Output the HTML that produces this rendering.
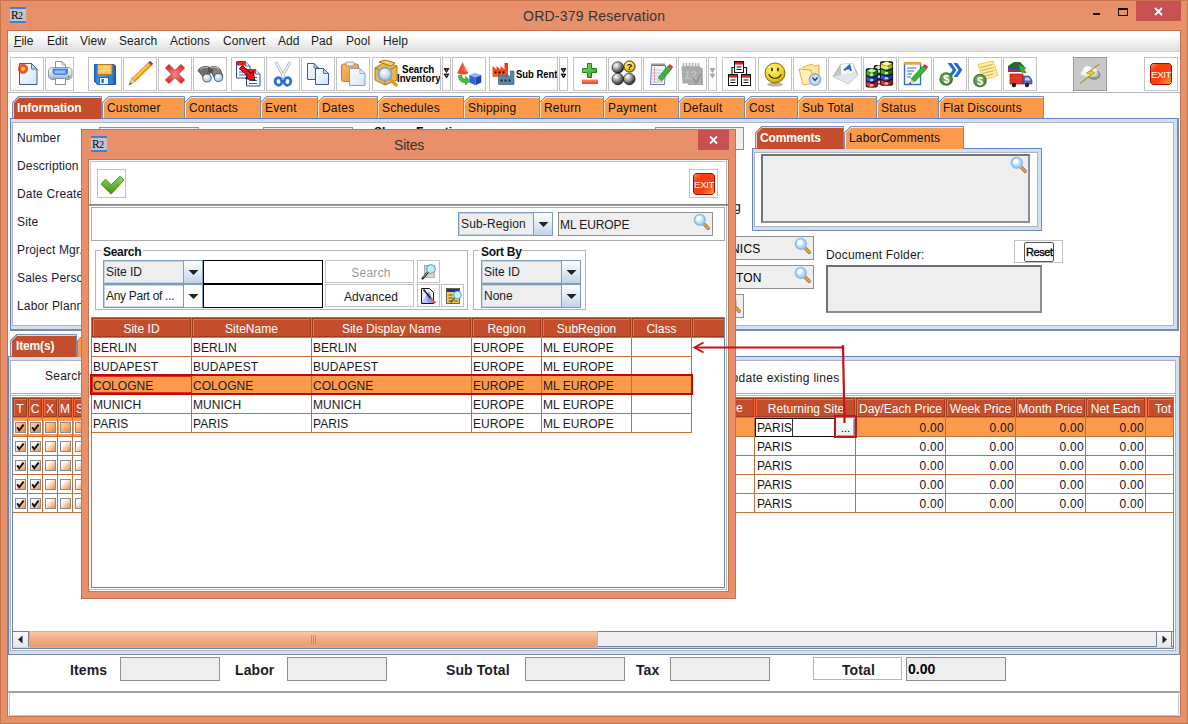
<!DOCTYPE html><html><head><meta charset="utf-8"><title>ORD-379 Reservation</title><style>
*{box-sizing:border-box;margin:0;padding:0}
html,body{width:1188px;height:724px;overflow:hidden}
body{position:relative;background:#E8906A;font-family:"Liberation Sans",sans-serif;font-size:12px;color:#000}
div,span,svg{position:absolute}
span{white-space:nowrap;line-height:16px}
.t13{font-size:12px;letter-spacing:0.15px}
.t12{font-size:12px;line-height:15px}
.b{font-weight:bold}
.wh{color:#fff}
.tb{background:#fff;border:1px solid #c3c3c3;overflow:hidden}
.fld{background:#eee;border:1px solid #8e8f8f}
.hc{background:#C44E2C;border:1px solid #a03c1c;box-shadow:inset 1px 1px 0 #FF6A3A;color:#fff;font-size:12px;line-height:18px;padding-top:1px;text-align:center;overflow:hidden;white-space:nowrap;letter-spacing:0.03px}
.cb{width:11px;height:11px;border:1px solid #848c98;background:linear-gradient(135deg,#fff 25%,#f8c8a0 60%,#f09048 100%)}
.cbs{width:13px;height:13px;border:1px solid #fff;background:linear-gradient(135deg,#fdd0a8 15%,#f68a34 85%);box-shadow:inset 0 0 0 1px #848c98}
.combo{background:#eee;border:1px solid #7f9db9;box-shadow:inset 0 0 0 1px #c4d4e8}
.cbtn{background:linear-gradient(#fdfeff,#dfe8f4 55%,#c0d2ea);border:1px solid #7f9db9}
</style></head><body>
<svg width="0" height="0" style="left:0;top:0"><defs><linearGradient id="gPage" x1="0" y1="0" x2="1" y2="1"><stop offset="0" stop-color="#fff"/><stop offset="1" stop-color="#d4e2f6"/></linearGradient><radialGradient id="gLens" cx="0.4" cy="0.35" r="0.7"><stop offset="0" stop-color="#fff"/><stop offset="1" stop-color="#8ec4ee"/></radialGradient><radialGradient id="gBall" cx="0.35" cy="0.3" r="0.8"><stop offset="0" stop-color="#ffffff"/><stop offset="0.35" stop-color="#b0b0b0"/><stop offset="0.75" stop-color="#484848"/><stop offset="1" stop-color="#080808"/></radialGradient><radialGradient id="gYel" cx="0.4" cy="0.3" r="0.8"><stop offset="0" stop-color="#fff68a"/><stop offset="0.6" stop-color="#f4d018"/><stop offset="1" stop-color="#b88a00"/></radialGradient><radialGradient id="gGrn" cx="0.4" cy="0.3" r="0.8"><stop offset="0" stop-color="#88b878"/><stop offset="1" stop-color="#3c7838"/></radialGradient><linearGradient id="gRed" x1="0" y1="0" x2="0" y2="1"><stop offset="0" stop-color="#f0522c"/><stop offset="1" stop-color="#c41a10"/></linearGradient><linearGradient id="gBlue" x1="0" y1="0" x2="0" y2="1"><stop offset="0" stop-color="#5aa0f0"/><stop offset="1" stop-color="#1c5cc0"/></linearGradient><linearGradient id="gExit" x1="0" y1="0" x2="1" y2="1"><stop offset="0" stop-color="#f49078"/><stop offset="0.25" stop-color="#ff3c08"/><stop offset="0.6" stop-color="#f6420e"/><stop offset="1" stop-color="#ffa038"/></linearGradient><radialGradient id="gStar" cx="0.5" cy="0.5" r="0.5"><stop offset="0" stop-color="#ffd020"/><stop offset="0.45" stop-color="#f85818"/><stop offset="0.8" stop-color="#f03020" stop-opacity=".85"/><stop offset="1" stop-color="#f03020" stop-opacity="0"/></radialGradient><linearGradient id="gPrn" x1="0" y1="0" x2="0" y2="1"><stop offset="0" stop-color="#fcfcfc"/><stop offset="0.6" stop-color="#d4d8de"/><stop offset="1" stop-color="#9ca4b0"/></linearGradient><linearGradient id="gFlop" x1="0" y1="0" x2="1" y2="0"><stop offset="0" stop-color="#1c6cc4"/><stop offset="0.25" stop-color="#48a0ec"/><stop offset="0.8" stop-color="#2c84dc"/><stop offset="1" stop-color="#1460b4"/></linearGradient><radialGradient id="gX" cx="0.5" cy="0.5" r="0.6"><stop offset="0" stop-color="#f49090"/><stop offset="0.6" stop-color="#e64848"/><stop offset="1" stop-color="#d42828"/></radialGradient><linearGradient id="gClip" x1="0" y1="0" x2="1" y2="1"><stop offset="0" stop-color="#f8b868"/><stop offset="1" stop-color="#f09030"/></linearGradient><linearGradient id="gCone" x1="0" y1="0" x2="1" y2="0"><stop offset="0" stop-color="#f03818"/><stop offset="0.6" stop-color="#f46838"/><stop offset="1" stop-color="#f8a878"/></linearGradient><linearGradient id="gFac" x1="0" y1="0" x2="0" y2="1"><stop offset="0" stop-color="#f02810"/><stop offset="1" stop-color="#f86830"/></linearGradient><linearGradient id="gPlus" x1="0" y1="0" x2="1" y2="1"><stop offset="0" stop-color="#90d880"/><stop offset="1" stop-color="#28a020"/></linearGradient><linearGradient id="gMinus" x1="0" y1="0" x2="0" y2="1"><stop offset="0" stop-color="#f89060"/><stop offset="1" stop-color="#f04020"/></linearGradient><radialGradient id="gCloud" cx="0.35" cy="0.3" r="0.8"><stop offset="0" stop-color="#ffffff"/><stop offset="0.6" stop-color="#f0f0f0"/><stop offset="1" stop-color="#c0c0c0"/></radialGradient></defs></svg>
<div style="left:0px;top:0px;width:1188px;height:724px;border:1px solid #C5744E;background:#E8906A"></div>
<div style="left:10px;top:7px;width:16px;height:16px;background:#c2c4c8;border-top:2px solid #3a80dc;border-bottom:2px solid #3a80dc;overflow:hidden"><span style="left:1px;top:-1px;font-family:'Liberation Serif',serif;font-size:11.5px;line-height:14px;letter-spacing:-0.5px">R<span style="position:static;font-size:9.5px">2</span></span></div>
<span class="" style="left:523px;top:6px;font-size:14px;line-height:20px;color:#333;letter-spacing:0.24px">ORD-379 Reservation</span>
<div style="left:1136px;top:1px;width:45px;height:20px;background:#c75050"></div>
<svg style="left:1090px;top:4px" width="92" height="16" viewBox="0 0 92 16"><rect x="3" y="9" width="7" height="2" fill="#111"/><rect x="28.5" y="4.5" width="9" height="7" fill="none" stroke="#111"/><rect x="28" y="4" width="10" height="2" fill="#111"/><path d="M65 4l7 7M72 4l-7 7" stroke="#fff" stroke-width="1.8" fill="none"/></svg>
<div style="left:7px;top:30px;width:1174px;height:687px;background:#fff;border:1px solid #C5744E"></div>
<div style="left:8px;top:31px;width:1172px;height:21px;background:linear-gradient(#fff 0%,#fdfdfd 30%,#ececec 70%,#dedede 100%);border-bottom:1px solid #d0d0d0"></div>
<span class="" style="left:14px;top:33px;font-size:12px;color:#1a1a1a;letter-spacing:0.05px"><u>F</u>ile</span>
<span class="" style="left:47px;top:33px;font-size:12px;color:#1a1a1a;letter-spacing:0.05px">Edit</span>
<span class="" style="left:80px;top:33px;font-size:12px;color:#1a1a1a;letter-spacing:0.05px">View</span>
<span class="" style="left:119px;top:33px;font-size:12px;color:#1a1a1a;letter-spacing:0.05px">Search</span>
<span class="" style="left:170px;top:33px;font-size:12px;color:#1a1a1a;letter-spacing:0.05px">Actions</span>
<span class="" style="left:223px;top:33px;font-size:12px;color:#1a1a1a;letter-spacing:0.05px">Convert</span>
<span class="" style="left:278px;top:33px;font-size:12px;color:#1a1a1a;letter-spacing:0.05px">Add</span>
<span class="" style="left:311px;top:33px;font-size:12px;color:#1a1a1a;letter-spacing:0.05px">Pad</span>
<span class="" style="left:346px;top:33px;font-size:12px;color:#1a1a1a;letter-spacing:0.05px">Pool</span>
<span class="" style="left:383px;top:33px;font-size:12px;color:#1a1a1a;letter-spacing:0.05px">Help</span>
<div style="left:8px;top:52px;width:1172px;height:41px;background:#fff;border-bottom:1px solid #b8b8b8"></div>
<div class="tb" style="left:10px;top:57px;width:34px;height:34px;"><svg style="left:0px;top:0px" width="32" height="32" viewBox="0 0 32 32"><path d="M8.500 5.500h12l5.500 5.500v15.500h-17.500z" fill="url(#gPage)" stroke="#3c5894"/><path d="M20.500 5.500v5.500h5.500z" fill="#b8d4f4" stroke="#3c5894" stroke-width=".8"/><circle cx="12" cy="10.800" r="5.600" fill="url(#gStar)"/><circle cx="12" cy="10.800" r="1.900" fill="#ffe840"/></svg></div>
<div class="tb" style="left:45px;top:57px;width:29px;height:34px;"><svg style="left:0px;top:0px" width="27" height="32" viewBox="0 0 27 32"><path d="M9.500 3.500h6.500l3.500 3.500v6h-10z" fill="#fff" stroke="#8890a0"/><path d="M16 3.500v3.500h3.500" fill="none" stroke="#8890a0" stroke-width=".8"/><path d="M2.500 13c0-2.500 2-3.500 4-3.500h15.500c2 0 4 1 4 3.500v5c0 2-2 3.500-4.500 3.500h-14.500c-2.500 0-4.500-1.500-4.500-3.500z" fill="url(#gPrn)" stroke="#7c8494" stroke-width=".8"/><path d="M6.500 10.500h15.500v4c0 1.500-1.500 2.500-3 2.500h-9.500c-1.500 0-3-1-3-2.500z" fill="#3c84e8"/><path d="M8.500 12.500h11v3h-11z" fill="#9cc4f8"/><rect x="9.500" y="20.500" width="10" height="6" fill="#fff" stroke="#8890a0"/><circle cx="22.600" cy="18.500" r="1" fill="#2aa82a"/></svg></div>
<div class="tb" style="left:88px;top:57px;width:34px;height:34px;"><svg style="left:0px;top:0px" width="32" height="32" viewBox="0 0 32 32"><path d="M5.500 6.500h19.500l1.500 1.500v18.500h-18l-3-3z" fill="url(#gFlop)" stroke="#1858a8"/><rect x="8.500" y="6.500" width="14.500" height="10" fill="#f8c060" stroke="#b87828"/><path d="M10.500 9.500h10.500M10.500 12.500h10.500" stroke="#f8e070" stroke-width="1.600"/><rect x="10.500" y="19.500" width="9" height="7" fill="#f0f4fc" stroke="#1858a8" stroke-width=".8"/><rect x="12.500" y="21" width="2.200" height="4" fill="#1c64c8"/></svg></div>
<div class="tb" style="left:123px;top:57px;width:34px;height:34px;"><svg style="left:0px;top:0px" width="32" height="32" viewBox="0 0 32 32"><path d="M4 28l3-9 8 1z" fill="#000" opacity=".12"/><path d="M8 20.500L24.200 4.800l3 3L11 23.500z" fill="#f89c10" stroke="#c87404" stroke-width=".6"/><path d="M9.200 21.500L25.400 5.800" stroke="#ffd458" stroke-width="1.300"/><path d="M8 20.500l3 3L5 27z" fill="#f0d0a8" stroke="#a08060" stroke-width=".5"/><path d="M5 27l1.500-2.600 1.300 1.300z" fill="#333"/><path d="M24.200 4.800l1.200-1.200 3 3-1.200 1.200z" fill="#d83030"/><path d="M25.400 3.600l.8-.7 3 3-.8.700z" fill="#222"/></svg></div>
<div class="tb" style="left:158px;top:57px;width:34px;height:34px;"><svg style="left:0px;top:0px" width="32" height="32" viewBox="0 0 32 32"><path d="M6.500 10L10 6.500 16 12.500 22 6.500 25.500 10 19.500 16 25.500 22 22 25.500 16 19.500 10 25.500 6.500 22 12.500 16z" fill="url(#gX)" stroke="#c03030" stroke-width=".9" stroke-linejoin="round"/></svg></div>
<div class="tb" style="left:193px;top:57px;width:34px;height:34px;"><svg style="left:0px;top:0px" width="32" height="32" viewBox="0 0 32 32"><path d="M4 12.500c2-3.500 7-5 11-3.500l3 5-8 6z" fill="#707070" stroke="#404040" stroke-width=".8"/><path d="M15 10c3-2.500 8-2 11 1l3 7-8 3z" fill="#808080" stroke="#404040" stroke-width=".8"/><path d="M6 11.500c2-2 5-2.500 8-2M17 9.500c3-1 6-.5 8.500 1.500" stroke="#c0c0c0" stroke-width="1" fill="none"/><ellipse cx="13" cy="20" rx="4.200" ry="4" fill="url(#gLens)" stroke="#444" stroke-width=".8"/><ellipse cx="24.500" cy="19.500" rx="4.200" ry="4" fill="url(#gLens)" stroke="#444" stroke-width=".8"/><rect x="14" y="10.500" width="5" height="4" fill="#505050"/></svg></div>
<div class="tb" style="left:231px;top:57px;width:34px;height:34px;"><svg style="left:0px;top:0px" width="32" height="32" viewBox="0 0 32 32"><path d="M4.500 3.500h9l4.500 4.500v12h-13.500z" fill="#fff" stroke="#2c4c9c"/><rect x="5" y="4" width="8.500" height="3.500" fill="#e82020"/><path d="M13.500 3.500v4.500h4.500" fill="#dce8f8" stroke="#2c4c9c" stroke-width=".8"/><path d="M7 11h8M7 14h8M7 17h8" stroke="#3c5cac"/><path d="M14.500 11.500h9l4.500 4.500v12h-13.500z" fill="#fff" stroke="#2c4c9c"/><rect x="15" y="12" width="8.500" height="3.500" fill="#e82020"/><path d="M23.500 11.500v4.500h4.500" fill="#dce8f8" stroke="#2c4c9c" stroke-width=".8"/><path d="M17 19.500h8M17 22.500h8M17 25.500h8" stroke="#3c5cac"/><path d="M7.500 10.500l3-3 8.500 8 2-2.500 2 9.500-9.500-2 2.500-2z" fill="#f01010" stroke="#200" stroke-width=".9" stroke-linejoin="round"/></svg></div>
<div class="tb" style="left:266px;top:57px;width:34px;height:34px;"><svg style="left:0px;top:0px" width="32" height="32" viewBox="0 0 32 32"><path d="M9.500 5l7.500 14M22.500 5l-7.500 14" stroke="#b0b4bc" stroke-width="2.800" stroke-linecap="round"/><path d="M9.500 5l7.500 14M22.500 5l-7.500 14" stroke="#f4f6fa" stroke-width="1.400" stroke-linecap="round"/><ellipse cx="11.500" cy="23.500" rx="3.300" ry="3.800" fill="none" stroke="#2870d8" stroke-width="2.800" transform="rotate(-15 11.500 23.500)"/><ellipse cx="20.500" cy="23.500" rx="3.300" ry="3.800" fill="none" stroke="#2870d8" stroke-width="2.800" transform="rotate(15 20.500 23.500)"/></svg></div>
<div class="tb" style="left:301px;top:57px;width:34px;height:34px;"><svg style="left:0px;top:0px" width="32" height="32" viewBox="0 0 32 32"><path d="M5.500 5.500h6.500l4.500 4.500v11.500h-11z" fill="url(#gPage)" stroke="#3c5894"/><path d="M12 5.500v4.500h4.500z" fill="#b8d4f4" stroke="#3c5894" stroke-width=".8"/><path d="M13.500 10.500h8l5 5v11h-13z" fill="url(#gPage)" stroke="#3c5894"/><path d="M21.500 10.500v5h5z" fill="#b8d4f4" stroke="#3c5894" stroke-width=".8"/></svg></div>
<div class="tb" style="left:336px;top:57px;width:34px;height:34px;"><svg style="left:0px;top:0px" width="32" height="32" viewBox="0 0 32 32"><rect x="4.500" y="6" width="17" height="17.500" rx="2" fill="url(#gClip)" stroke="#c87828"/><rect x="9" y="4" width="8" height="4" rx="1" fill="#f0f0f0" stroke="#888" stroke-width=".8"/><path d="M12.500 10.500h10.500l5 5v12h-15.500z" fill="url(#gPage)" stroke="#8898d8"/><path d="M23 10.500v5h5" fill="none" stroke="#8898d8" stroke-width=".8"/></svg></div>
<div class="tb" style="left:372px;top:57px;width:69px;height:34px;"><svg style="left:-2px;top:-2px" width="30" height="32" viewBox="0 0 30 32"><path d="M4 12l10-6 12 4v14l-12 5-10-5z" fill="#e8b848" stroke="#a87818"/><path d="M4 12l10 4 12-6M14 16v13" stroke="#a87818" fill="none"/><path d="M8 6l6-2 10 3-4 3z" fill="#f4d070" stroke="#a87818"/><path d="M19 23l6 6" stroke="#e09a3a" stroke-width="3.500" stroke-linecap="round"/><circle cx="14" cy="18" r="6.500" fill="url(#gLens)" stroke="#8aa4c4" stroke-width="2"/></svg><span class="b" style="left:29px;top:6px;font-size:11px;line-height:11px;transform:scaleX(0.88);transform-origin:0 0">Search</span><span class="b" style="left:24px;top:15px;font-size:11px;line-height:11px;transform:scaleX(0.88);transform-origin:0 0">Inventory</span></div>
<div class="tb" style="left:442px;top:57px;width:9px;height:34px;"><svg style="left:0px;top:0px" width="7" height="32" viewBox="0 0 7 32"><path d="M1 10.500h5l-2.500 4zM1 16h5l-2.500 4z" fill="#111" stroke="#111" stroke-width=".8"/><path d="M3.500 11.600v.8M3.500 17.100v.8" stroke="#fff" stroke-width="1"/></svg></div>
<div class="tb" style="left:452px;top:57px;width:34px;height:34px;"><svg style="left:0px;top:0px" width="32" height="32" viewBox="0 0 32 32"><path d="M9.500 4L15.200 14.800H4.500z" fill="url(#gCone)"/><ellipse cx="9.800" cy="14.800" rx="5.400" ry="1.800" fill="#e8502c"/><path d="M16.400 17l5.600-2.300 6.300 2.300-5.800 2.500z" fill="#8cb8f8"/><path d="M16.400 17l6.100 2.500v7.800l-6.100-2.800z" fill="#2c68d8"/><path d="M22.500 19.500l5.800-2.500v7.500l-5.800 2.800z" fill="#1c48b0"/><path d="M5.500 17.500c0 5 3 7.500 7 7v2.500l4.500-4.500-4.500-4v2.500c-2 .3-3.500-.7-3.500-3.500z" fill="#40c040" stroke="#1c8c1c" stroke-width=".6"/></svg></div>
<div class="tb" style="left:489px;top:57px;width:69px;height:34px;"><svg style="left:0px;top:0px" width="26" height="32" viewBox="0 0 26 32"><path d="M2.500 19V8l4 3.500V8l4 3.500V8l4 3.500V5h3.500v14z" fill="url(#gFac)"/><path d="M4.500 14.500h2M8.500 14.500h2M12.500 14.500h2" stroke="#300" stroke-width="2"/><path d="M8.500 26.500V16l4 3v-3l4 3v-3l4 3v-6h3.500v13.500z" fill="#5c88a8" stroke="#3c6080" stroke-width=".7"/><path d="M10.500 22.500h2M14.500 22.500h2M18.500 22.500h2" stroke="#123" stroke-width="2"/></svg><span class="b" style="left:26px;top:10px;font-size:11px;line-height:12px;transform:scaleX(0.86);transform-origin:0 0">Sub Rent</span></div>
<div class="tb" style="left:559px;top:57px;width:9px;height:34px;"><svg style="left:0px;top:0px" width="7" height="32" viewBox="0 0 7 32"><path d="M1 10.500h5l-2.500 4zM1 16h5l-2.500 4z" fill="#111" stroke="#111" stroke-width=".8"/><path d="M3.500 11.600v.8M3.500 17.100v.8" stroke="#fff" stroke-width="1"/></svg></div>
<div class="tb" style="left:573px;top:57px;width:34px;height:34px;"><svg style="left:0px;top:0px" width="32" height="32" viewBox="0 0 32 32"><path d="M13.500 5.500h4v5h5v4h-5v5h-4v-5h-5v-4h5z" fill="url(#gPlus)" stroke="#1c8418"/><rect x="8" y="21.500" width="16" height="4.500" fill="url(#gMinus)"/></svg></div>
<div class="tb" style="left:608px;top:57px;width:34px;height:34px;"><svg style="left:0px;top:0px" width="32" height="32" viewBox="0 0 32 32"><circle cx="8.800" cy="9.500" r="5.800" fill="url(#gBall)" stroke="#000" stroke-width=".6"/><circle cx="8.800" cy="21" r="5.800" fill="url(#gBall)" stroke="#000" stroke-width=".6"/><circle cx="20.300" cy="21" r="5.800" fill="url(#gBall)" stroke="#000" stroke-width=".6"/><circle cx="20.500" cy="8.500" r="5.600" fill="url(#gYel)" stroke="#302000" stroke-width=".9"/><text x="20.500" y="12" font-family="Liberation Sans,sans-serif" font-size="9.500" font-weight="bold" text-anchor="middle" fill="#111">?</text></svg></div>
<div class="tb" style="left:643px;top:57px;width:34px;height:34px;"><svg style="left:0px;top:0px" width="32" height="32" viewBox="0 0 32 32"><path d="M7.500 7.500h14l-1 19h-14z" fill="#f4f6fc" stroke="#6c7cc8"/><path d="M8 12h12M8 15h12M7.500 18h12M7.500 21h12M7 24h12" stroke="#a8b8e8" stroke-width=".8"/><path d="M10.500 9v15" stroke="#e88" stroke-width=".8"/><path d="M8 7.500v-2M10 7.500v-2M12 7.500v-2M14 7.500v-2M16 7.500v-2M18 7.500v-2M20 7.500v-2" stroke="#555" stroke-width="1.200"/><path d="M14 20L24 8l3.500 3L17.500 23z" fill="#38b838" stroke="#187818" stroke-width=".7"/><path d="M14 20l3.500 3-5 2z" fill="#e8c8a0"/><path d="M24 8l1.800-2 3.500 3-1.800 2z" fill="#e03030"/></svg></div>
<div class="tb" style="left:678px;top:57px;width:29px;height:34px;"><svg style="left:0px;top:0px" width="27" height="32" viewBox="0 0 27 32"><path d="M2.500 8h18.500l1 17.500H3.500z" fill="#ababab"/><path d="M21 9.500l2.500.5.500 17H9v-1.500h13z" fill="#a0a0a0"/><path d="M4.500 8.500V5.500M7.500 8.500V5.500M10.500 8.500V5.500M13.500 8.500V5.500M16.500 8.500V5.500M19.500 8.500V5.500" stroke="#b4b4b4" stroke-width="1.600" stroke-linecap="round"/><text x="11.500" y="20.500" font-family="Liberation Sans,sans-serif" font-size="11.500" font-weight="bold" text-anchor="middle" fill="#c4c4c4">12</text><path d="M13.500 19l3.500 6 5-9" stroke="#949494" stroke-width="1.600" fill="none"/></svg></div>
<div class="tb" style="left:708px;top:57px;width:9px;height:34px;"><svg style="left:0px;top:0px" width="7" height="32" viewBox="0 0 7 32"><path d="M1 10.500h5l-2.500 4zM1 16h5l-2.500 4z" fill="#a8a8a8" stroke="#a8a8a8" stroke-width=".8"/></svg></div>
<div class="tb" style="left:722px;top:57px;width:34px;height:34px;"><svg style="left:0px;top:0px" width="32" height="32" viewBox="0 0 32 32"><path d="M9 17V9.500h14.500V17" stroke="#111" stroke-width="1.100" fill="none"/><rect x="11.500" y="3.500" width="9" height="11" fill="#fff" stroke="#111"/><rect x="12" y="4" width="8" height="2.600" fill="#e81818"/><path d="M13.500 9h5M13.500 11.500h5" stroke="#111" stroke-width="1.100"/><rect x="5.500" y="16.500" width="9" height="11" fill="#fff" stroke="#111"/><rect x="6" y="17" width="8" height="2.600" fill="#e81818"/><path d="M7.500 22h5M7.500 24.500h5" stroke="#111" stroke-width="1.100"/><rect x="18.500" y="16.500" width="9" height="11" fill="#fff" stroke="#111"/><rect x="19" y="17" width="8" height="2.600" fill="#e81818"/><path d="M20.500 22h5M20.500 24.500h5" stroke="#111" stroke-width="1.100"/></svg></div>
<div class="tb" style="left:758px;top:57px;width:34px;height:34px;"><svg style="left:0px;top:0px" width="32" height="32" viewBox="0 0 32 32"><ellipse cx="16" cy="26.500" rx="8" ry="2" fill="#402800" opacity=".35"/><circle cx="16" cy="15" r="10" fill="url(#gYel)" stroke="#705000" stroke-width=".8"/><ellipse cx="13" cy="11.500" rx=".9" ry="2" fill="#222"/><ellipse cx="19" cy="11.500" rx=".9" ry="2" fill="#222"/><path d="M10 16.500c2 5 10 5 12 0" stroke="#222" stroke-width="1.200" fill="none" stroke-linecap="round"/></svg></div>
<div class="tb" style="left:793px;top:57px;width:34px;height:34px;"><svg style="left:0px;top:0px" width="32" height="32" viewBox="0 0 32 32"><path d="M9 9l9-3 2 2 5-1v14l-14 5z" fill="#fce8a0" stroke="#e8a830" stroke-width=".9"/><path d="M5 11l12 1 3 13-11 2z" fill="#fdf0b8" stroke="#e8a830" stroke-width=".9"/><circle cx="21" cy="21.500" r="5.600" fill="#c4e0fc" stroke="#90acd0" stroke-width="1.600"/><path d="M18.500 19.500l2.500 2.800 2.500-2.800" stroke="#223" stroke-width="1.200" fill="none"/></svg></div>
<div class="tb" style="left:828px;top:57px;width:34px;height:34px;"><svg style="left:0px;top:0px" width="32" height="32" viewBox="0 0 32 32"><path d="M4 18.500L11.500 6.500l12-1L29 16.500l-9.500 9.500z" fill="#c4c4cc" stroke="#a0a0a8" stroke-width=".7"/><path d="M11.500 6.500l12-1 3 8.500-14 3z" fill="#fdfdff"/><path d="M12.500 17l14-3 2.500 2.500-9.500 9.500-15.500-7.500z" fill="#e4e4ea"/><path d="M15 12.500l5.500-5 1.500 5.500M17 10.800l4.200-.4" stroke="#2464d8" stroke-width="1.800" fill="none"/></svg></div>
<div class="tb" style="left:863px;top:57px;width:34px;height:34px;"><svg style="left:0px;top:0px" width="32" height="32" viewBox="0 0 32 32"><rect x="9.7" y="6.9" width="9.6" height="19.299999999999997" rx="2" fill="#111"/><path d="M10.5 9.5l4.0-2.400 4.0 2.400-4.0 2.200z" fill="#b0f0a0"/><path d="M10.5 9.7l4.0 2.200v4.1l-4.0-2.200z" fill="#30b030"/><path d="M18.5 9.7l-4.0 2.200v4.1l4.0-2.200z" fill="#187018"/><ellipse cx="14.5" cy="13.35" rx="1.800" ry="1.300" fill="#fff" opacity=".75"/><path d="M10.5 15.0l4.0 2.200v4.1l-4.0-2.200z" fill="#3050e8"/><path d="M18.5 15.0l-4.0 2.200v4.1l4.0-2.200z" fill="#1830a8"/><ellipse cx="14.5" cy="18.65" rx="1.800" ry="1.300" fill="#fff" opacity=".75"/><path d="M10.5 20.299999999999997l4.0 2.200v4.1l-4.0-2.200z" fill="#e83030"/><path d="M18.5 20.299999999999997l-4.0 2.200v4.1l4.0-2.200z" fill="#a81818"/><ellipse cx="14.5" cy="23.949999999999996" rx="1.800" ry="1.300" fill="#fff" opacity=".75"/><rect x="1.7" y="10.200000000000001" width="12.1" height="19.299999999999997" rx="2" fill="#111"/><path d="M2.5 12.8l5.25-2.400 5.25 2.400-5.25 2.200z" fill="#b0f0a0"/><path d="M2.5 13.0l5.25 2.200v4.1l-5.25-2.200z" fill="#30b030"/><path d="M13.0 13.0l-5.25 2.200v4.1l5.25-2.200z" fill="#187018"/><ellipse cx="7.75" cy="16.65" rx="1.800" ry="1.300" fill="#fff" opacity=".75"/><path d="M2.5 18.3l5.25 2.200v4.1l-5.25-2.200z" fill="#3050e8"/><path d="M13.0 18.3l-5.25 2.200v4.1l5.25-2.200z" fill="#1830a8"/><ellipse cx="7.75" cy="21.95" rx="1.800" ry="1.300" fill="#fff" opacity=".75"/><path d="M2.5 23.6l5.25 2.200v4.1l-5.25-2.200z" fill="#e83030"/><path d="M13.0 23.6l-5.25 2.200v4.1l5.25-2.200z" fill="#a81818"/><ellipse cx="7.75" cy="27.25" rx="1.800" ry="1.300" fill="#fff" opacity=".75"/><rect x="16.0" y="3.1999999999999997" width="13.1" height="24.599999999999998" rx="2" fill="#111"/><path d="M16.8 5.8l5.75-2.400 5.75 2.400-5.75 2.200z" fill="#ffff90"/><path d="M16.8 6.0l5.75 2.200v4.1l-5.75-2.200z" fill="#e8e838"/><path d="M28.3 6.0l-5.75 2.200v4.1l5.75-2.200z" fill="#a8a818"/><ellipse cx="22.55" cy="9.65" rx="1.800" ry="1.300" fill="#fff" opacity=".75"/><path d="M16.8 11.3l5.75 2.200v4.1l-5.75-2.200z" fill="#30b030"/><path d="M28.3 11.3l-5.75 2.200v4.1l5.75-2.200z" fill="#187018"/><ellipse cx="22.55" cy="14.950000000000001" rx="1.800" ry="1.300" fill="#fff" opacity=".75"/><path d="M16.8 16.6l5.75 2.200v4.1l-5.75-2.200z" fill="#3050e8"/><path d="M28.3 16.6l-5.75 2.200v4.1l5.75-2.200z" fill="#1830a8"/><ellipse cx="22.55" cy="20.25" rx="1.800" ry="1.300" fill="#fff" opacity=".75"/><path d="M16.8 21.9l5.75 2.200v4.1l-5.75-2.200z" fill="#e83030"/><path d="M28.3 21.9l-5.75 2.200v4.1l5.75-2.200z" fill="#a81818"/><ellipse cx="22.55" cy="25.549999999999997" rx="1.800" ry="1.300" fill="#fff" opacity=".75"/></svg></div>
<div class="tb" style="left:898px;top:57px;width:34px;height:34px;"><svg style="left:0px;top:0px" width="32" height="32" viewBox="0 0 32 32"><rect x="5.500" y="5.500" width="16" height="21" fill="#fff" stroke="#2c6cd8" stroke-width="1.400"/><rect x="5" y="4" width="17" height="2.500" fill="#f0a030"/><path d="M8 10h9M8 13h7M8 16h5M8 19h4" stroke="#2c6cd8" stroke-width="1.200"/><path d="M12 21L24 8l3.500 3L15.500 24z" fill="#38b838" stroke="#187818" stroke-width=".7"/><path d="M12 21l3.500 3-5.500 2.500z" fill="#e8c8a0"/><path d="M10 26.500l1-2.200 1.300 1.200z" fill="#222"/><path d="M24 8l1.800-2 3.500 3-1.800 2z" fill="#e03030"/></svg></div>
<div class="tb" style="left:933px;top:57px;width:34px;height:34px;"><svg style="left:0px;top:0px" width="32" height="32" viewBox="0 0 32 32"><path d="M13.500 5h3.800l5.200 7-5.200 7h-3.800l5.200-7z" fill="#2468d8"/><path d="M19.500 5h3.800l5 7-5 7h-3.800l5-7z" fill="#2468d8"/><circle cx="12.2" cy="21" r="6.800" fill="#3c7838"/><circle cx="12.2" cy="21" r="5.600" fill="url(#gGrn)"/><text x="12.2" y="25" font-family="Liberation Sans,sans-serif" font-size="11" font-weight="bold" text-anchor="middle" fill="#fff">$</text></svg></div>
<div class="tb" style="left:968px;top:57px;width:34px;height:34px;"><svg style="left:0px;top:0px" width="32" height="32" viewBox="0 0 32 32"><path d="M9 6.500l15-3.500 5 14-5 2.500-10 2z" fill="#fcf0a0" stroke="#f0b838" stroke-width=".8"/><path d="M11.500 9.500l12-3M12.500 12.500l12-3M13.500 15.500l12-3M14.500 18.500l10-2.500" stroke="#c8b050" stroke-width="1"/><circle cx="11" cy="22.5" r="6.800" fill="#3c7838"/><circle cx="11" cy="22.5" r="5.600" fill="url(#gGrn)"/><text x="11" y="26.5" font-family="Liberation Sans,sans-serif" font-size="11" font-weight="bold" text-anchor="middle" fill="#fff">$</text></svg></div>
<div class="tb" style="left:1003px;top:57px;width:34px;height:34px;"><svg style="left:0px;top:0px" width="32" height="32" viewBox="0 0 32 32"><path d="M4 8l6-4h6l4 4v6H4z" fill="#286828"/><path d="M4 11h16v3H4z" fill="#c02828"/><rect x="4" y="9" width="12" height="2" fill="#2848c8"/><path d="M15 6l7 4-2 1 2 4-5-1-2-4z" fill="#28b828" stroke="#106810" stroke-width=".5"/><rect x="6" y="16" width="13" height="10" fill="#e03828" stroke="#901810" stroke-width=".6"/><path d="M19 18h6l3 4v4h-9z" fill="#5868b8" stroke="#283878" stroke-width=".6"/><path d="M21 19.500h3.500l2 3H21z" fill="#c8d8f8"/><circle cx="10" cy="27" r="2.200" fill="#222"/><circle cx="23" cy="27" r="2.200" fill="#222"/></svg></div>
<div class="tb" style="left:1073px;top:57px;width:34px;height:34px;background:#c8c8c8;border-color:#9a9a9a;"><svg style="left:0px;top:0px" width="32" height="32" viewBox="0 0 32 32"><ellipse cx="20" cy="17" rx="6.500" ry="5" fill="#909090"/><path d="M9.500 19c-3.500 0-4-5-.5-6 0-5 6-6.500 8.500-3 3-1.500 6.500.5 5.500 4 2.500 1 1.500 5-1 5z" fill="url(#gCloud)"/><path d="M25.500 6L12.500 15l4.500 1.500L6 25.500 21 14.500l-4.500-1.500z" fill="#f8cc18" stroke="#a88408" stroke-width=".7" stroke-linejoin="round"/></svg></div>
<div class="tb" style="left:1144px;top:57px;width:34px;height:34px;"><svg style="left:0px;top:0px" width="32" height="32" viewBox="0 0 32 32"><path d="M7.5 5.5h17l2 2v17l-2 2h-17l-2-2v-17z" fill="url(#gExit)" stroke="#a80808"/></svg><span style="left:6px;top:11px;font-size:9.8px;line-height:12px;color:#fff;letter-spacing:-0.4px">EXIT</span></div>
<svg style="left:12px;top:96px" width="90" height="23" viewBox="0 0 90 23"><path d="M0.5 23V6.5L6.5 0.5H89.5V23" fill="#C44E2C" stroke="#6f8fc4" stroke-width="1"/><path d="M1.5 23V7L7 1.5H89" fill="none" stroke="#fff" stroke-opacity="0.75" stroke-width="1"/></svg>
<span class="b wh" style="left:17px;top:100px;font-size:12px;letter-spacing:-0.15px">Information</span>
<svg style="left:102px;top:96px" width="83" height="23" viewBox="0 0 83 23"><path d="M0.5 23V6.5L6.5 0.5H82.5V23" fill="#FC9A4C" stroke="#6f8fc4" stroke-width="1"/><path d="M1.5 23V7L7 1.5H82" fill="none" stroke="#fff" stroke-opacity="0.75" stroke-width="1"/></svg>
<span class="" style="left:107px;top:100px;font-size:12px;letter-spacing:0.2px;color:#111">Customer</span>
<svg style="left:184px;top:96px" width="77" height="23" viewBox="0 0 77 23"><path d="M0.5 23V6.5L6.5 0.5H76.5V23" fill="#FC9A4C" stroke="#6f8fc4" stroke-width="1"/><path d="M1.5 23V7L7 1.5H76" fill="none" stroke="#fff" stroke-opacity="0.75" stroke-width="1"/></svg>
<span class="" style="left:189px;top:100px;font-size:12px;letter-spacing:0.2px;color:#111">Contacts</span>
<svg style="left:260px;top:96px" width="58" height="23" viewBox="0 0 58 23"><path d="M0.5 23V6.5L6.5 0.5H57.5V23" fill="#FC9A4C" stroke="#6f8fc4" stroke-width="1"/><path d="M1.5 23V7L7 1.5H57" fill="none" stroke="#fff" stroke-opacity="0.75" stroke-width="1"/></svg>
<span class="" style="left:265px;top:100px;font-size:12px;letter-spacing:0.2px;color:#111">Event</span>
<svg style="left:317px;top:96px" width="61" height="23" viewBox="0 0 61 23"><path d="M0.5 23V6.5L6.5 0.5H60.5V23" fill="#FC9A4C" stroke="#6f8fc4" stroke-width="1"/><path d="M1.5 23V7L7 1.5H60" fill="none" stroke="#fff" stroke-opacity="0.75" stroke-width="1"/></svg>
<span class="" style="left:322px;top:100px;font-size:12px;letter-spacing:0.2px;color:#111">Dates</span>
<svg style="left:377px;top:96px" width="87" height="23" viewBox="0 0 87 23"><path d="M0.5 23V6.5L6.5 0.5H86.5V23" fill="#FC9A4C" stroke="#6f8fc4" stroke-width="1"/><path d="M1.5 23V7L7 1.5H86" fill="none" stroke="#fff" stroke-opacity="0.75" stroke-width="1"/></svg>
<span class="" style="left:382px;top:100px;font-size:12px;letter-spacing:0.2px;color:#111">Schedules</span>
<svg style="left:463px;top:96px" width="77" height="23" viewBox="0 0 77 23"><path d="M0.5 23V6.5L6.5 0.5H76.5V23" fill="#FC9A4C" stroke="#6f8fc4" stroke-width="1"/><path d="M1.5 23V7L7 1.5H76" fill="none" stroke="#fff" stroke-opacity="0.75" stroke-width="1"/></svg>
<span class="" style="left:468px;top:100px;font-size:12px;letter-spacing:0.2px;color:#111">Shipping</span>
<svg style="left:539px;top:96px" width="65" height="23" viewBox="0 0 65 23"><path d="M0.5 23V6.5L6.5 0.5H64.5V23" fill="#FC9A4C" stroke="#6f8fc4" stroke-width="1"/><path d="M1.5 23V7L7 1.5H64" fill="none" stroke="#fff" stroke-opacity="0.75" stroke-width="1"/></svg>
<span class="" style="left:544px;top:100px;font-size:12px;letter-spacing:0.2px;color:#111">Return</span>
<svg style="left:603px;top:96px" width="76" height="23" viewBox="0 0 76 23"><path d="M0.5 23V6.5L6.5 0.5H75.5V23" fill="#FC9A4C" stroke="#6f8fc4" stroke-width="1"/><path d="M1.5 23V7L7 1.5H75" fill="none" stroke="#fff" stroke-opacity="0.75" stroke-width="1"/></svg>
<span class="" style="left:608px;top:100px;font-size:12px;letter-spacing:0.2px;color:#111">Payment</span>
<svg style="left:678px;top:96px" width="67" height="23" viewBox="0 0 67 23"><path d="M0.5 23V6.5L6.5 0.5H66.5V23" fill="#FC9A4C" stroke="#6f8fc4" stroke-width="1"/><path d="M1.5 23V7L7 1.5H66" fill="none" stroke="#fff" stroke-opacity="0.75" stroke-width="1"/></svg>
<span class="" style="left:683px;top:100px;font-size:12px;letter-spacing:0.2px;color:#111">Default</span>
<svg style="left:744px;top:96px" width="54" height="23" viewBox="0 0 54 23"><path d="M0.5 23V6.5L6.5 0.5H53.5V23" fill="#FC9A4C" stroke="#6f8fc4" stroke-width="1"/><path d="M1.5 23V7L7 1.5H53" fill="none" stroke="#fff" stroke-opacity="0.75" stroke-width="1"/></svg>
<span class="" style="left:749px;top:100px;font-size:12px;letter-spacing:0.2px;color:#111">Cost</span>
<svg style="left:797px;top:96px" width="80" height="23" viewBox="0 0 80 23"><path d="M0.5 23V6.5L6.5 0.5H79.5V23" fill="#FC9A4C" stroke="#6f8fc4" stroke-width="1"/><path d="M1.5 23V7L7 1.5H79" fill="none" stroke="#fff" stroke-opacity="0.75" stroke-width="1"/></svg>
<span class="" style="left:802px;top:100px;font-size:12px;letter-spacing:0.2px;color:#111">Sub Total</span>
<svg style="left:876px;top:96px" width="63" height="23" viewBox="0 0 63 23"><path d="M0.5 23V6.5L6.5 0.5H62.5V23" fill="#FC9A4C" stroke="#6f8fc4" stroke-width="1"/><path d="M1.5 23V7L7 1.5H62" fill="none" stroke="#fff" stroke-opacity="0.75" stroke-width="1"/></svg>
<span class="" style="left:881px;top:100px;font-size:12px;letter-spacing:0.2px;color:#111">Status</span>
<svg style="left:938px;top:96px" width="106" height="23" viewBox="0 0 106 23"><path d="M0.5 23V6.5L6.5 0.5H105.5V23" fill="#FC9A4C" stroke="#6f8fc4" stroke-width="1"/><path d="M1.5 23V7L7 1.5H105" fill="none" stroke="#fff" stroke-opacity="0.75" stroke-width="1"/></svg>
<span class="" style="left:943px;top:100px;font-size:12px;letter-spacing:0.2px;color:#111">Flat Discounts</span>
<div style="left:10px;top:118px;width:1169px;height:213px;background:#cfe0f4"></div>
<div style="left:10px;top:118px;width:1169px;height:1px;background:#6080c8"></div>
<div style="left:10px;top:118px;width:1px;height:213px;background:#6080c8"></div>
<div style="left:10px;top:329px;width:1169px;height:2px;background:#7a8ca4"></div>
<div style="left:1177px;top:118px;width:2px;height:213px;background:#7a8ca4"></div>
<div style="left:12px;top:122px;width:1162px;height:204px;background:#fff;border:1px solid #b0b4ba"></div>
<div style="left:13px;top:118px;width:88px;height:1px;background:#C44E2C"></div>
<span class="" style="left:17px;top:130px;font-size:12px;color:#1a1a30;letter-spacing:0.15px">Number</span>
<span class="" style="left:17px;top:158px;font-size:12px;color:#1a1a30;letter-spacing:0.15px">Description</span>
<span class="" style="left:17px;top:186px;font-size:12px;color:#1a1a30;letter-spacing:0.15px">Date Created</span>
<span class="" style="left:17px;top:214px;font-size:12px;color:#1a1a30;letter-spacing:0.15px">Site</span>
<span class="" style="left:17px;top:242px;font-size:12px;color:#1a1a30;letter-spacing:0.15px">Project Mgr.</span>
<span class="" style="left:17px;top:270px;font-size:12px;color:#1a1a30;letter-spacing:0.15px">Sales Person</span>
<span class="" style="left:17px;top:298px;font-size:12px;color:#1a1a30;letter-spacing:0.15px">Labor Planner</span>
<div class="fld" style="left:99px;top:127px;width:100px;height:23px;"></div>
<div class="fld" style="left:263px;top:127px;width:90px;height:23px;"></div>
<span class="b" style="left:374px;top:124px;font-size:12px">Shows Function</span>
<div class="fld" style="left:655px;top:127px;width:89px;height:23px;"></div>
<span class="t13" style="left:734px;top:199px;">g</span>
<div class="fld" style="left:700px;top:236px;width:114px;height:24px;"><span style="left:30px;top:4px;letter-spacing:0.2px">NICS</span></div>
<div class="fld" style="left:700px;top:265px;width:114px;height:24px;"><span style="left:35px;top:4px;letter-spacing:0.2px">TON</span></div>
<div class="fld" style="left:700px;top:294px;width:44px;height:24px;"></div>
<svg style="left:794px;top:237px" width="18" height="18" viewBox="0 0 18 18"><path d="M10.800 10.800L15.200 15.200" stroke="#8a6a48" stroke-width="3.400" stroke-linecap="round"/><path d="M10.800 10.800L15.200 15.200" stroke="#f0a038" stroke-width="2.200" stroke-linecap="round"/><circle cx="6.800" cy="6.800" r="5.300" fill="url(#gLens)" stroke="#8cbcec" stroke-width="1.700"/><circle cx="5.800" cy="5.600" r="2.600" fill="#fff" opacity=".85"/></svg>
<svg style="left:794px;top:266px" width="18" height="18" viewBox="0 0 18 18"><path d="M10.800 10.800L15.200 15.200" stroke="#8a6a48" stroke-width="3.400" stroke-linecap="round"/><path d="M10.800 10.800L15.200 15.200" stroke="#f0a038" stroke-width="2.200" stroke-linecap="round"/><circle cx="6.800" cy="6.800" r="5.300" fill="url(#gLens)" stroke="#8cbcec" stroke-width="1.700"/><circle cx="5.800" cy="5.600" r="2.600" fill="#fff" opacity=".85"/></svg>
<svg style="left:724px;top:296px" width="18" height="18" viewBox="0 0 18 18"><path d="M10.800 10.800L15.200 15.200" stroke="#8a6a48" stroke-width="3.400" stroke-linecap="round"/><path d="M10.800 10.800L15.200 15.200" stroke="#f0a038" stroke-width="2.200" stroke-linecap="round"/><circle cx="6.800" cy="6.800" r="5.300" fill="url(#gLens)" stroke="#8cbcec" stroke-width="1.700"/><circle cx="5.800" cy="5.600" r="2.600" fill="#fff" opacity=".85"/></svg>
<div style="left:752px;top:148px;width:290px;height:83px;background:#cfe0f4"></div>
<div style="left:752px;top:148px;width:290px;height:1px;background:#6080c8"></div>
<div style="left:752px;top:148px;width:1px;height:83px;background:#6080c8"></div>
<div style="left:752px;top:230px;width:290px;height:1px;background:#7a8ca4"></div>
<div style="left:1041px;top:148px;width:1px;height:83px;background:#7a8ca4"></div>
<div style="left:754px;top:152px;width:284px;height:75px;background:#fff;border:1px solid #b0b4ba"></div>
<svg style="left:755px;top:126px" width="89" height="23" viewBox="0 0 89 23"><path d="M0.5 23V6.5L6.5 0.5H88.5V23" fill="#C44E2C" stroke="#6f8fc4" stroke-width="1"/><path d="M1.5 23V7L7 1.5H88" fill="none" stroke="#fff" stroke-opacity="0.75" stroke-width="1"/></svg>
<span class="b wh" style="left:760px;top:130px;font-size:12px;letter-spacing:-0.15px">Comments</span>
<svg style="left:844px;top:126px" width="120" height="23" viewBox="0 0 120 23"><path d="M0.5 23V6.5L6.5 0.5H119.5V23" fill="#FC9A4C" stroke="#6f8fc4" stroke-width="1"/><path d="M1.5 23V7L7 1.5H119" fill="none" stroke="#fff" stroke-opacity="0.75" stroke-width="1"/></svg>
<span class="" style="left:849px;top:130px;font-size:12px;letter-spacing:0.2px;color:#111">LaborComments</span>
<div style="left:756px;top:148px;width:88px;height:1px;background:#C44E2C"></div>
<div style="left:761px;top:154px;width:269px;height:69px;background:#eee;border:2px solid #70757c;border-right-color:#8a8f96;border-bottom-color:#8a8f96"></div>
<svg style="left:1010px;top:156px" width="18" height="18" viewBox="0 0 18 18"><path d="M10.800 10.800L15.200 15.200" stroke="#8a6a48" stroke-width="3.400" stroke-linecap="round"/><path d="M10.800 10.800L15.200 15.200" stroke="#f0a038" stroke-width="2.200" stroke-linecap="round"/><circle cx="6.800" cy="6.800" r="5.300" fill="url(#gLens)" stroke="#8cbcec" stroke-width="1.700"/><circle cx="5.800" cy="5.600" r="2.600" fill="#fff" opacity=".85"/></svg>
<span class="" style="left:826px;top:247px;font-size:12px;color:#1a1a1a;letter-spacing:0.2px">Document Folder:</span>
<div style="left:826px;top:265px;width:216px;height:48px;background:#eee;border:2px solid;border-color:#6c7078 #8a8f96 #8a8f96 #6c7078"></div>
<div style="left:1014px;top:240px;width:49px;height:23px;background:#fff;border:1px solid #c3c3c3"></div>
<div style="left:1024px;top:242px;width:30px;height:20px;background:#fff;border:1px solid #555;border-radius:2px"><span class="t12" style="left:1px;top:2px;font-size:11px;letter-spacing:-0.45px;-webkit-text-stroke:0.35px #000">Reset</span></div>
<div style="left:8px;top:356px;width:1172px;height:299px;background:#cfe0f4"></div>
<div style="left:8px;top:356px;width:1172px;height:1px;background:#6080c8"></div>
<div style="left:8px;top:356px;width:1px;height:299px;background:#6080c8"></div>
<div style="left:8px;top:654px;width:1172px;height:1px;background:#7a8ca4"></div>
<div style="left:1179px;top:356px;width:1px;height:299px;background:#7a8ca4"></div>
<div style="left:10px;top:360px;width:1166px;height:291px;background:#fff;border:1px solid #b0b4ba"></div>
<svg style="left:10px;top:334px" width="67" height="23" viewBox="0 0 67 23"><path d="M0.5 23V6.5L6.5 0.5H66.5V23" fill="#C44E2C" stroke="#6f8fc4" stroke-width="1"/><path d="M1.5 23V7L7 1.5H66" fill="none" stroke="#fff" stroke-opacity="0.75" stroke-width="1"/></svg>
<span class="b wh" style="left:16px;top:338px;font-size:12px;letter-spacing:-0.15px">Item(s)</span>
<div style="left:11px;top:356px;width:65px;height:1px;background:#C44E2C"></div>
<svg style="left:77px;top:334px" width="6" height="23" viewBox="0 0 6 23"><path d="M0.5 23V6.5L6 1V23" fill="#FC9A4C" stroke="#6f8fc4"/></svg>
<div style="left:10px;top:360px;width:1166px;height:34px;background:#fff;border:1px solid #b0b4ba"></div>
<div style="left:10px;top:395px;width:1166px;height:256px;background:#fff;border:1px solid #b0b4ba"></div>
<span class="" style="left:45px;top:368px;font-size:12px;color:#1a1a1a;letter-spacing:0.25px">Search</span>
<span class="" style="left:731.5px;top:370px;font-size:12px;color:#1a1a1a;letter-spacing:0.3px">pdate existing lines</span>
<div style="left:12px;top:397px;width:1162px;height:252px;border:1px solid #6c84a0"></div>
<div style="left:13px;top:398px;width:1160px;height:20px;background:#FF6A3A"></div>
<div class="hc" style="left:13px;top:398px;width:14px;height:19px;">T</div>
<div class="hc" style="left:28px;top:398px;width:14px;height:19px;">C</div>
<div class="hc" style="left:43px;top:398px;width:14px;height:19px;">X</div>
<div class="hc" style="left:58px;top:398px;width:14px;height:19px;">M</div>
<div class="hc" style="left:73px;top:398px;width:14px;height:19px;">S</div>
<div class="hc" style="left:88px;top:398px;width:14px;height:19px;"></div>
<div class="hc" style="left:103px;top:398px;width:14px;height:19px;"></div>
<div class="hc" style="left:118px;top:398px;width:14px;height:19px;"></div>
<div class="hc" style="left:133px;top:398px;width:621px;height:19px;text-align:right;padding-right:10px"></div>
<span class="t12 wh" style="left:736px;top:401px">e</span>
<div class="hc" style="left:755px;top:398px;width:100px;height:19px;padding-left:2px">Returning Site</div>
<div class="hc" style="left:856px;top:398px;width:89px;height:19px;">Day/Each Price</div>
<div class="hc" style="left:946px;top:398px;width:69px;height:19px;">Week Price</div>
<div class="hc" style="left:1016px;top:398px;width:69px;height:19px;">Month Price</div>
<div class="hc" style="left:1086px;top:398px;width:59px;height:19px;">Net Each</div>
<div class="hc" style="left:1147px;top:398px;width:26px;height:19px;border-right:none;text-align:left;padding-left:7px">Tot</div>
<div style="left:13px;top:418px;width:1160px;height:18px;background:#FC9A4C"></div>
<div style="left:13px;top:436px;width:1160px;height:1px;background:#BE7238"></div>
<div style="left:27px;top:418px;width:1px;height:18px;background:#BE7238"></div>
<div style="left:42px;top:418px;width:1px;height:18px;background:#BE7238"></div>
<div style="left:57px;top:418px;width:1px;height:18px;background:#BE7238"></div>
<div style="left:72px;top:418px;width:1px;height:18px;background:#BE7238"></div>
<div style="left:87px;top:418px;width:1px;height:18px;background:#BE7238"></div>
<div style="left:102px;top:418px;width:1px;height:18px;background:#BE7238"></div>
<div style="left:117px;top:418px;width:1px;height:18px;background:#BE7238"></div>
<div style="left:132px;top:418px;width:1px;height:18px;background:#BE7238"></div>
<div style="left:754px;top:418px;width:1px;height:18px;background:#BE7238"></div>
<div style="left:855px;top:418px;width:1px;height:18px;background:#BE7238"></div>
<div style="left:945px;top:418px;width:1px;height:18px;background:#BE7238"></div>
<div style="left:1015px;top:418px;width:1px;height:18px;background:#BE7238"></div>
<div style="left:1085px;top:418px;width:1px;height:18px;background:#BE7238"></div>
<div style="left:1145px;top:418px;width:1px;height:18px;background:#BE7238"></div>
<div class="cbs" style="left:14px;top:421px;width:13px;height:13px;"><svg width="9" height="9" viewBox="0 0 9 9" style="left:1px;top:1px"><path d="M1.200 4.300L3.200 7.300L7.600 1.600" stroke="#111" stroke-width="1.900" fill="none"/></svg></div>
<div class="cbs" style="left:29px;top:421px;width:13px;height:13px;"><svg width="9" height="9" viewBox="0 0 9 9" style="left:1px;top:1px"><path d="M1.200 4.300L3.200 7.300L7.600 1.600" stroke="#111" stroke-width="1.900" fill="none"/></svg></div>
<div class="cbs" style="left:44px;top:421px;width:13px;height:13px;"></div>
<div class="cbs" style="left:59px;top:421px;width:13px;height:13px;"></div>
<div class="cbs" style="left:74px;top:421px;width:13px;height:13px;"></div>
<div class="cbs" style="left:89px;top:421px;width:13px;height:13px;"></div>
<div class="cbs" style="left:104px;top:421px;width:13px;height:13px;"></div>
<div class="cbs" style="left:119px;top:421px;width:13px;height:13px;"></div>
<span class="t12" style="left:856px;top:421px;width:88px;text-align:right;letter-spacing:0.3px;color:#101020">0.00</span>
<span class="t12" style="left:946px;top:421px;width:68px;text-align:right;letter-spacing:0.3px;color:#101020">0.00</span>
<span class="t12" style="left:1016px;top:421px;width:68px;text-align:right;letter-spacing:0.3px;color:#101020">0.00</span>
<span class="t12" style="left:1086px;top:421px;width:58px;text-align:right;letter-spacing:0.3px;color:#101020">0.00</span>
<div style="left:13px;top:455px;width:1160px;height:1px;background:#BE7238"></div>
<div style="left:27px;top:437px;width:1px;height:18px;background:#BE7238"></div>
<div style="left:42px;top:437px;width:1px;height:18px;background:#BE7238"></div>
<div style="left:57px;top:437px;width:1px;height:18px;background:#BE7238"></div>
<div style="left:72px;top:437px;width:1px;height:18px;background:#BE7238"></div>
<div style="left:87px;top:437px;width:1px;height:18px;background:#BE7238"></div>
<div style="left:102px;top:437px;width:1px;height:18px;background:#BE7238"></div>
<div style="left:117px;top:437px;width:1px;height:18px;background:#BE7238"></div>
<div style="left:132px;top:437px;width:1px;height:18px;background:#BE7238"></div>
<div style="left:754px;top:437px;width:1px;height:18px;background:#BE7238"></div>
<div style="left:855px;top:437px;width:1px;height:18px;background:#BE7238"></div>
<div style="left:945px;top:437px;width:1px;height:18px;background:#BE7238"></div>
<div style="left:1015px;top:437px;width:1px;height:18px;background:#BE7238"></div>
<div style="left:1085px;top:437px;width:1px;height:18px;background:#BE7238"></div>
<div style="left:1145px;top:437px;width:1px;height:18px;background:#BE7238"></div>
<div class="cb" style="left:15px;top:441px;width:11px;height:11px;"><svg width="9" height="9" viewBox="0 0 9 9" style="left:0px;top:0px"><path d="M1.200 4.300L3.200 7.300L7.600 1.600" stroke="#111" stroke-width="1.900" fill="none"/></svg></div>
<div class="cb" style="left:30px;top:441px;width:11px;height:11px;"><svg width="9" height="9" viewBox="0 0 9 9" style="left:0px;top:0px"><path d="M1.200 4.300L3.200 7.300L7.600 1.600" stroke="#111" stroke-width="1.900" fill="none"/></svg></div>
<div class="cb" style="left:45px;top:441px;width:11px;height:11px;"></div>
<div class="cb" style="left:60px;top:441px;width:11px;height:11px;"></div>
<div class="cb" style="left:75px;top:441px;width:11px;height:11px;"></div>
<div class="cb" style="left:90px;top:441px;width:11px;height:11px;"></div>
<div class="cb" style="left:105px;top:441px;width:11px;height:11px;"></div>
<div class="cb" style="left:120px;top:441px;width:11px;height:11px;"></div>
<span class="t12" style="left:757px;top:440px;color:#111">PARIS</span>
<span class="t12" style="left:856px;top:440px;width:88px;text-align:right;letter-spacing:0.3px;color:#101020">0.00</span>
<span class="t12" style="left:946px;top:440px;width:68px;text-align:right;letter-spacing:0.3px;color:#101020">0.00</span>
<span class="t12" style="left:1016px;top:440px;width:68px;text-align:right;letter-spacing:0.3px;color:#101020">0.00</span>
<span class="t12" style="left:1086px;top:440px;width:58px;text-align:right;letter-spacing:0.3px;color:#101020">0.00</span>
<div style="left:13px;top:474px;width:1160px;height:1px;background:#BE7238"></div>
<div style="left:27px;top:456px;width:1px;height:18px;background:#BE7238"></div>
<div style="left:42px;top:456px;width:1px;height:18px;background:#BE7238"></div>
<div style="left:57px;top:456px;width:1px;height:18px;background:#BE7238"></div>
<div style="left:72px;top:456px;width:1px;height:18px;background:#BE7238"></div>
<div style="left:87px;top:456px;width:1px;height:18px;background:#BE7238"></div>
<div style="left:102px;top:456px;width:1px;height:18px;background:#BE7238"></div>
<div style="left:117px;top:456px;width:1px;height:18px;background:#BE7238"></div>
<div style="left:132px;top:456px;width:1px;height:18px;background:#BE7238"></div>
<div style="left:754px;top:456px;width:1px;height:18px;background:#BE7238"></div>
<div style="left:855px;top:456px;width:1px;height:18px;background:#BE7238"></div>
<div style="left:945px;top:456px;width:1px;height:18px;background:#BE7238"></div>
<div style="left:1015px;top:456px;width:1px;height:18px;background:#BE7238"></div>
<div style="left:1085px;top:456px;width:1px;height:18px;background:#BE7238"></div>
<div style="left:1145px;top:456px;width:1px;height:18px;background:#BE7238"></div>
<div class="cb" style="left:15px;top:460px;width:11px;height:11px;"><svg width="9" height="9" viewBox="0 0 9 9" style="left:0px;top:0px"><path d="M1.200 4.300L3.200 7.300L7.600 1.600" stroke="#111" stroke-width="1.900" fill="none"/></svg></div>
<div class="cb" style="left:30px;top:460px;width:11px;height:11px;"><svg width="9" height="9" viewBox="0 0 9 9" style="left:0px;top:0px"><path d="M1.200 4.300L3.200 7.300L7.600 1.600" stroke="#111" stroke-width="1.900" fill="none"/></svg></div>
<div class="cb" style="left:45px;top:460px;width:11px;height:11px;"></div>
<div class="cb" style="left:60px;top:460px;width:11px;height:11px;"></div>
<div class="cb" style="left:75px;top:460px;width:11px;height:11px;"></div>
<div class="cb" style="left:90px;top:460px;width:11px;height:11px;"></div>
<div class="cb" style="left:105px;top:460px;width:11px;height:11px;"></div>
<div class="cb" style="left:120px;top:460px;width:11px;height:11px;"></div>
<span class="t12" style="left:757px;top:459px;color:#111">PARIS</span>
<span class="t12" style="left:856px;top:459px;width:88px;text-align:right;letter-spacing:0.3px;color:#101020">0.00</span>
<span class="t12" style="left:946px;top:459px;width:68px;text-align:right;letter-spacing:0.3px;color:#101020">0.00</span>
<span class="t12" style="left:1016px;top:459px;width:68px;text-align:right;letter-spacing:0.3px;color:#101020">0.00</span>
<span class="t12" style="left:1086px;top:459px;width:58px;text-align:right;letter-spacing:0.3px;color:#101020">0.00</span>
<div style="left:13px;top:493px;width:1160px;height:1px;background:#BE7238"></div>
<div style="left:27px;top:475px;width:1px;height:18px;background:#BE7238"></div>
<div style="left:42px;top:475px;width:1px;height:18px;background:#BE7238"></div>
<div style="left:57px;top:475px;width:1px;height:18px;background:#BE7238"></div>
<div style="left:72px;top:475px;width:1px;height:18px;background:#BE7238"></div>
<div style="left:87px;top:475px;width:1px;height:18px;background:#BE7238"></div>
<div style="left:102px;top:475px;width:1px;height:18px;background:#BE7238"></div>
<div style="left:117px;top:475px;width:1px;height:18px;background:#BE7238"></div>
<div style="left:132px;top:475px;width:1px;height:18px;background:#BE7238"></div>
<div style="left:754px;top:475px;width:1px;height:18px;background:#BE7238"></div>
<div style="left:855px;top:475px;width:1px;height:18px;background:#BE7238"></div>
<div style="left:945px;top:475px;width:1px;height:18px;background:#BE7238"></div>
<div style="left:1015px;top:475px;width:1px;height:18px;background:#BE7238"></div>
<div style="left:1085px;top:475px;width:1px;height:18px;background:#BE7238"></div>
<div style="left:1145px;top:475px;width:1px;height:18px;background:#BE7238"></div>
<div class="cb" style="left:15px;top:479px;width:11px;height:11px;"><svg width="9" height="9" viewBox="0 0 9 9" style="left:0px;top:0px"><path d="M1.200 4.300L3.200 7.300L7.600 1.600" stroke="#111" stroke-width="1.900" fill="none"/></svg></div>
<div class="cb" style="left:30px;top:479px;width:11px;height:11px;"><svg width="9" height="9" viewBox="0 0 9 9" style="left:0px;top:0px"><path d="M1.200 4.300L3.200 7.300L7.600 1.600" stroke="#111" stroke-width="1.900" fill="none"/></svg></div>
<div class="cb" style="left:45px;top:479px;width:11px;height:11px;"></div>
<div class="cb" style="left:60px;top:479px;width:11px;height:11px;"></div>
<div class="cb" style="left:75px;top:479px;width:11px;height:11px;"></div>
<div class="cb" style="left:90px;top:479px;width:11px;height:11px;"></div>
<div class="cb" style="left:105px;top:479px;width:11px;height:11px;"></div>
<div class="cb" style="left:120px;top:479px;width:11px;height:11px;"></div>
<span class="t12" style="left:757px;top:478px;color:#111">PARIS</span>
<span class="t12" style="left:856px;top:478px;width:88px;text-align:right;letter-spacing:0.3px;color:#101020">0.00</span>
<span class="t12" style="left:946px;top:478px;width:68px;text-align:right;letter-spacing:0.3px;color:#101020">0.00</span>
<span class="t12" style="left:1016px;top:478px;width:68px;text-align:right;letter-spacing:0.3px;color:#101020">0.00</span>
<span class="t12" style="left:1086px;top:478px;width:58px;text-align:right;letter-spacing:0.3px;color:#101020">0.00</span>
<div style="left:13px;top:512px;width:1160px;height:1px;background:#BE7238"></div>
<div style="left:27px;top:494px;width:1px;height:18px;background:#BE7238"></div>
<div style="left:42px;top:494px;width:1px;height:18px;background:#BE7238"></div>
<div style="left:57px;top:494px;width:1px;height:18px;background:#BE7238"></div>
<div style="left:72px;top:494px;width:1px;height:18px;background:#BE7238"></div>
<div style="left:87px;top:494px;width:1px;height:18px;background:#BE7238"></div>
<div style="left:102px;top:494px;width:1px;height:18px;background:#BE7238"></div>
<div style="left:117px;top:494px;width:1px;height:18px;background:#BE7238"></div>
<div style="left:132px;top:494px;width:1px;height:18px;background:#BE7238"></div>
<div style="left:754px;top:494px;width:1px;height:18px;background:#BE7238"></div>
<div style="left:855px;top:494px;width:1px;height:18px;background:#BE7238"></div>
<div style="left:945px;top:494px;width:1px;height:18px;background:#BE7238"></div>
<div style="left:1015px;top:494px;width:1px;height:18px;background:#BE7238"></div>
<div style="left:1085px;top:494px;width:1px;height:18px;background:#BE7238"></div>
<div style="left:1145px;top:494px;width:1px;height:18px;background:#BE7238"></div>
<div class="cb" style="left:15px;top:498px;width:11px;height:11px;"><svg width="9" height="9" viewBox="0 0 9 9" style="left:0px;top:0px"><path d="M1.200 4.300L3.200 7.300L7.600 1.600" stroke="#111" stroke-width="1.900" fill="none"/></svg></div>
<div class="cb" style="left:30px;top:498px;width:11px;height:11px;"><svg width="9" height="9" viewBox="0 0 9 9" style="left:0px;top:0px"><path d="M1.200 4.300L3.200 7.300L7.600 1.600" stroke="#111" stroke-width="1.900" fill="none"/></svg></div>
<div class="cb" style="left:45px;top:498px;width:11px;height:11px;"></div>
<div class="cb" style="left:60px;top:498px;width:11px;height:11px;"></div>
<div class="cb" style="left:75px;top:498px;width:11px;height:11px;"></div>
<div class="cb" style="left:90px;top:498px;width:11px;height:11px;"></div>
<div class="cb" style="left:105px;top:498px;width:11px;height:11px;"></div>
<div class="cb" style="left:120px;top:498px;width:11px;height:11px;"></div>
<span class="t12" style="left:757px;top:497px;color:#111">PARIS</span>
<span class="t12" style="left:856px;top:497px;width:88px;text-align:right;letter-spacing:0.3px;color:#101020">0.00</span>
<span class="t12" style="left:946px;top:497px;width:68px;text-align:right;letter-spacing:0.3px;color:#101020">0.00</span>
<span class="t12" style="left:1016px;top:497px;width:68px;text-align:right;letter-spacing:0.3px;color:#101020">0.00</span>
<span class="t12" style="left:1086px;top:497px;width:58px;text-align:right;letter-spacing:0.3px;color:#101020">0.00</span>
<div style="left:755px;top:418px;width:81px;height:19px;background:#fff;border:1px solid #111"></div>
<div style="left:756px;top:419px;width:37px;height:17px;border-right:1px solid #333"></div>
<span class="t12" style="left:757px;top:421px;color:#111">PARIS</span>
<div style="left:836px;top:418px;width:19px;height:19px;background:linear-gradient(#fff,#ececec);border:1px solid;border-color:#f4f4f4 #7c7c7c #7c7c7c #f4f4f4;box-shadow:inset -1px -1px 0 #a8a8a8"><span class="t12" style="left:4px;top:2px;font-size:11px">...</span></div>
<div style="left:834px;top:415px;width:23px;height:23px;border:2px solid #c01818"></div>
<div style="left:13px;top:631px;width:1160px;height:17px;background:#eee;border-top:1px solid #6c84a0;border-bottom:1px solid #c4d8f0;box-shadow:inset 0 -1px 0 #6c84a0"></div>
<div style="left:13px;top:632px;width:16px;height:15px;background:linear-gradient(#fafafa,#e8e8e8);border-right:1px solid #6c84a0"><svg width="16" height="15" style="left:0;top:0"><path d="M9.5 3.5v8l-4.500-4z" fill="#222"/></svg></div>
<div style="left:1156px;top:632px;width:16px;height:15px;background:linear-gradient(#fafafa,#e8e8e8);border-left:1px solid #6c84a0;border-right:1px solid #6c84a0"><svg width="16" height="15" style="left:-1px;top:0"><path d="M6.500 3.500v8l4.500-4z" fill="#222"/></svg></div>
<div style="left:29px;top:631px;width:569px;height:17px;background:linear-gradient(#f6c8a6 0%,#efac84 50%,#ea9c6e 100%);border:1px solid #f8b41c"><svg width="8" height="10" style="left:281px;top:3px"><path d="M0.5 0v10M2.5 0v10M4.5 0v10" stroke="#9098b0" stroke-width="1"/></svg></div>
<span class="b" style="left:70px;top:662px;font-size:14px;color:#1c1c28;letter-spacing:0.1px">Items</span>
<div class="fld" style="left:120px;top:657px;width:100px;height:24px;"></div>
<span class="b" style="left:235px;top:662px;font-size:14px;color:#1c1c28;letter-spacing:0.1px">Labor</span>
<div class="fld" style="left:287px;top:657px;width:100px;height:24px;"></div>
<span class="b" style="left:446px;top:662px;font-size:14px;color:#1c1c28;letter-spacing:0.1px">Sub Total</span>
<div class="fld" style="left:525px;top:657px;width:100px;height:24px;"></div>
<span class="b" style="left:636px;top:662px;font-size:14px;color:#1c1c28;letter-spacing:0.1px">Tax</span>
<div class="fld" style="left:670px;top:657px;width:100px;height:24px;"></div>
<div style="left:813px;top:657px;width:89px;height:23px;background:#fff;border:1px solid #b4b4b4"></div>
<span class="b" style="left:842px;top:662px;font-size:14px;color:#1c1c28;letter-spacing:0.1px">Total</span>
<div class="fld" style="left:906px;top:657px;width:100px;height:24px;"><span class="b" style="left:1px;top:3px;font-size:14px">0.00</span></div>
<div style="left:8px;top:691px;width:1172px;height:25px;background:#fff;border-top:2px solid #a0a0a0"></div>
<div style="left:9px;top:692px;width:1170px;height:24px;border:1px solid #c8c8c8;border-top:none"></div>
<svg style="left:690px;top:340px;z-index:50" width="160" height="90" viewBox="0 0 160 90"><path d="M5 7.500H153.500" stroke="#c41414" stroke-width="1.900" fill="none"/><path d="M153 5L154.500 83" stroke="#c41414" stroke-width="2.200" fill="none"/><path d="M13.500 2.500L4.500 7.500L13.500 12.500" stroke="#c41414" stroke-width="2" fill="none"/></svg>
<div style="left:81px;top:129px;width:655px;height:470px;background:#E8906A;border:1px solid #C5744E;z-index:10">
<div style="left:9px;top:6px;width:16px;height:16px;background:#c2c4c8;border-top:2px solid #3a80dc;border-bottom:2px solid #3a80dc;overflow:hidden"><span style="left:1px;top:-1px;font-family:'Liberation Serif',serif;font-size:11.5px;line-height:14px;letter-spacing:-0.5px">R<span style="position:static;font-size:9.5px">2</span></span></div>
<span class="" style="left:312px;top:5px;font-size:14px;line-height:20px;color:#333;letter-spacing:-0.2px">Sites</span>
<div style="left:616px;top:0px;width:31px;height:20px;background:#c75050"><svg width="31" height="20" style="left:0;top:0"><path d="M12 6.5l7 7M19 6.5l-7 7" stroke="#fff" stroke-width="1.8"/></svg></div>
<div style="left:6px;top:29px;width:641px;height:433px;background:#fff;border:1px solid #C5744E"></div>
<div style="left:8px;top:31px;width:637px;height:1px;background:#c4c4c4"></div>
<div style="left:644px;top:31px;width:1px;height:429px;background:#b8b8b8"></div>
<div style="left:7px;top:459px;width:638px;height:1px;background:#b8b8b8"></div>
<div style="left:8px;top:31px;width:1px;height:43px;background:#cccccc"></div>
<div style="left:7px;top:74px;width:639px;height:2px;background:linear-gradient(#7c7c7c,#a8a8a8)"></div>
<div class="tb" style="left:15px;top:39px;width:29px;height:29px;"><svg style="left:0px;top:0px" width="27" height="27" viewBox="0 0 27 27"><defs><linearGradient id="gChk" x1="0" y1="0" x2="0" y2="1"><stop offset="0" stop-color="#a0d478"/><stop offset="0.45" stop-color="#6cb838"/><stop offset="1" stop-color="#3c9410"/></linearGradient></defs><path d="M3.100 14.100L7.500 9.100L13.100 14.700L22.200 6.100L26.100 10L13.100 24.100z" fill="url(#gChk)" stroke="#3a8a10" stroke-width=".9" stroke-linejoin="round"/></svg></div>
<div class="tb" style="left:607px;top:39px;width:29px;height:29px;"><svg style="left:0px;top:0px" width="32" height="32" viewBox="0 0 32 32"><path d="M5.5 3.5h17l2 2v17l-2 2h-17l-2-2v-17z" fill="url(#gExit)" stroke="#a80808"/></svg><span style="left:4px;top:9px;font-size:9.8px;line-height:12px;color:#fff;letter-spacing:-0.4px">EXIT</span></div>
<div style="left:9px;top:77px;width:634px;height:34px;background:#fff;border:1px solid #ababab"></div>
<div class="combo" style="left:376px;top:82px;width:95px;height:24px;background:#eee"><span style="left:2px;top:3px;color:#1a1a1a;font-size:12px;letter-spacing:0.15px">Sub-Region</span></div>
<div class="cbtn" style="left:451px;top:82px;width:20px;height:24px;"><svg width="18" height="22" style="left:0;top:0"><path d="M4.5 9.0h10l-5 5z" fill="#222"/></svg></div>
<div class="fld" style="left:476px;top:82px;width:155px;height:24px;"><span style="left:1px;top:4px;color:#1a1a1a;font-size:12px;letter-spacing:-0.1px">ML EUROPE</span></div>
<svg style="left:611px;top:83px" width="18" height="18" viewBox="0 0 18 18"><path d="M10.800 10.800L15.200 15.200" stroke="#8a6a48" stroke-width="3.400" stroke-linecap="round"/><path d="M10.800 10.800L15.200 15.200" stroke="#f0a038" stroke-width="2.200" stroke-linecap="round"/><circle cx="6.800" cy="6.800" r="5.300" fill="url(#gLens)" stroke="#8cbcec" stroke-width="1.700"/><circle cx="5.800" cy="5.600" r="2.600" fill="#fff" opacity=".85"/></svg>
<div style="left:13px;top:120px;width:373px;height:60px;border:1px solid #b4b4b4"></div>
<div style="left:19px;top:118px;width:42px;height:6px;background:#fff"></div>
<span class="b" style="left:21px;top:114px;color:#111;font-size:12px;letter-spacing:-0.3px">Search</span>
<div style="left:391px;top:120px;width:113px;height:60px;border:1px solid #b4b4b4"></div>
<div style="left:397px;top:118px;width:43px;height:6px;background:#fff"></div>
<span class="b" style="left:399px;top:114px;color:#111;font-size:12px;letter-spacing:-0.3px">Sort By</span>
<div class="combo" style="left:21px;top:130px;width:100px;height:24px;background:#eee"><span style="left:2px;top:3px;color:#1a1a1a;font-size:12px;letter-spacing:0px">Site ID</span></div>
<div class="cbtn" style="left:101px;top:130px;width:20px;height:24px;"><svg width="18" height="22" style="left:0;top:0"><path d="M4.5 9.0h10l-5 5z" fill="#222"/></svg></div>
<div class="combo" style="left:21px;top:154px;width:100px;height:24px;background:#fff"><span style="left:2px;top:3px;color:#1a1a1a;font-size:12px;letter-spacing:-0.3px">Any Part of ...</span></div>
<div class="cbtn" style="left:101px;top:154px;width:20px;height:24px;background:#fff;"><svg width="18" height="22" style="left:0;top:0"><path d="M4.5 9.0h10l-5 5z" fill="#222"/></svg></div>
<div style="left:121px;top:130px;width:120px;height:24px;background:#fff;border:1px solid #000"></div>
<div style="left:121px;top:154px;width:120px;height:24px;background:#fff;border:1px solid #000"></div>
<div class="tb" style="left:243px;top:130px;width:89px;height:23px;text-align:center"><span style="position:static;line-height:25px;color:#9a9a9a;letter-spacing:0.25px;padding-left:3px">Search</span></div>
<div class="tb" style="left:243px;top:154px;width:89px;height:23px;text-align:center"><span style="position:static;line-height:25px;color:#1a1a1a;letter-spacing:0.1px;padding-left:3px">Advanced</span></div>
<div class="tb" style="left:335px;top:130px;width:23px;height:23px;"><svg style="left:0px;top:0px" width="21" height="21" viewBox="0 0 21 21"><rect x="6.500" y="4.500" width="10" height="12" fill="#d4d4d4" stroke="#888" stroke-width=".6"/><path d="M4.500 17.500l6-7" stroke="#222" stroke-width="2.200" stroke-linecap="round"/><path d="M5 16.500l5-5.800" stroke="#ddd" stroke-width=".7"/><circle cx="13" cy="8" r="4.300" fill="#b8f0f4" stroke="#5c8cac" stroke-width=".9"/></svg></div>
<div class="tb" style="left:335px;top:154px;width:23px;height:23px;"><svg style="left:0px;top:0px" width="21" height="21" viewBox="0 0 21 21"><path d="M3.500 3.500h8l4 4v11h-12z" fill="#f0f0fc" stroke="#112"/><path d="M4 18L11 6l4.500 12z" fill="#7c8cf0" opacity=".85"/><path d="M4 18l4-7 2 7z" fill="#b8c0f8"/><path d="M11.500 12.500l6 5.500" stroke="#d86020" stroke-width="2.200"/><path d="M5.500 4.500l7 8.500" stroke="#112" stroke-width="1.400"/></svg></div>
<div class="tb" style="left:359px;top:154px;width:23px;height:23px;"><svg style="left:0px;top:0px" width="21" height="21" viewBox="0 0 21 21"><rect x="4.500" y="3.500" width="13" height="15" fill="#f0d040" stroke="#443" stroke-width=".8"/><rect x="5" y="4" width="12" height="3" fill="#1c2cac"/><path d="M6.500 10h4M6.500 13h4M6.500 16h4M12 16h4" stroke="#776" stroke-width="1.400"/><path d="M8.500 17.500l4-4.500" stroke="#554" stroke-width="1.600"/><circle cx="15.500" cy="10" r="3.800" fill="#c0f4f8" stroke="#6c9ccc" stroke-width="1"/></svg></div>
<div class="combo" style="left:399px;top:130px;width:100px;height:24px;background:#eee"><span style="left:2px;top:3px;color:#1a1a1a;font-size:12px;letter-spacing:0px">Site ID</span></div>
<div class="cbtn" style="left:479px;top:130px;width:20px;height:24px;"><svg width="18" height="22" style="left:0;top:0"><path d="M4.5 9.0h10l-5 5z" fill="#222"/></svg></div>
<div class="combo" style="left:399px;top:154px;width:100px;height:24px;background:#eee"><span style="left:2px;top:3px;color:#1a1a1a;font-size:12px;letter-spacing:0px">None</span></div>
<div class="cbtn" style="left:479px;top:154px;width:20px;height:24px;"><svg width="18" height="22" style="left:0;top:0"><path d="M4.5 9.0h10l-5 5z" fill="#222"/></svg></div>
<div style="left:9px;top:187px;width:634px;height:271px;border:1px solid #6c84a0"></div>
<div style="left:10px;top:188px;width:632px;height:20px;background:#FF6A3A"></div>
<div class="hc" style="left:10px;top:188px;width:99px;height:19px;">Site ID</div>
<div class="hc" style="left:110px;top:188px;width:119px;height:19px;">SiteName</div>
<div class="hc" style="left:230px;top:188px;width:159px;height:19px;">Site Display Name</div>
<div class="hc" style="left:390px;top:188px;width:69px;height:19px;">Region</div>
<div class="hc" style="left:460px;top:188px;width:89px;height:19px;">SubRegion</div>
<div class="hc" style="left:550px;top:188px;width:59px;height:19px;">Class</div>
<div class="hc" style="left:610px;top:188px;width:32px;height:19px;border-right:none"></div>
<div style="left:10px;top:226px;width:600px;height:1px;background:#BE7238"></div>
<div style="left:109px;top:208px;width:1px;height:18px;background:#BE7238"></div>
<div style="left:229px;top:208px;width:1px;height:18px;background:#BE7238"></div>
<div style="left:389px;top:208px;width:1px;height:18px;background:#BE7238"></div>
<div style="left:459px;top:208px;width:1px;height:18px;background:#BE7238"></div>
<div style="left:549px;top:208px;width:1px;height:18px;background:#BE7238"></div>
<div style="left:609px;top:208px;width:1px;height:18px;background:#BE7238"></div>
<span class="t12" style="left:11px;top:211px;color:#1a1a24;letter-spacing:0.05px">BERLIN</span>
<span class="t12" style="left:111px;top:211px;color:#1a1a24;letter-spacing:0.05px">BERLIN</span>
<span class="t12" style="left:231px;top:211px;color:#1a1a24;letter-spacing:0.05px">BERLIN</span>
<span class="t12" style="left:391px;top:211px;color:#1a1a24;letter-spacing:0.05px">EUROPE</span>
<span class="t12" style="left:461px;top:211px;color:#1a1a24;letter-spacing:0.05px">ML EUROPE</span>
<div style="left:10px;top:245px;width:600px;height:1px;background:#BE7238"></div>
<div style="left:109px;top:227px;width:1px;height:18px;background:#BE7238"></div>
<div style="left:229px;top:227px;width:1px;height:18px;background:#BE7238"></div>
<div style="left:389px;top:227px;width:1px;height:18px;background:#BE7238"></div>
<div style="left:459px;top:227px;width:1px;height:18px;background:#BE7238"></div>
<div style="left:549px;top:227px;width:1px;height:18px;background:#BE7238"></div>
<div style="left:609px;top:227px;width:1px;height:18px;background:#BE7238"></div>
<span class="t12" style="left:11px;top:230px;color:#1a1a24;letter-spacing:0.05px">BUDAPEST</span>
<span class="t12" style="left:111px;top:230px;color:#1a1a24;letter-spacing:0.05px">BUDAPEST</span>
<span class="t12" style="left:231px;top:230px;color:#1a1a24;letter-spacing:0.05px">BUDAPEST</span>
<span class="t12" style="left:391px;top:230px;color:#1a1a24;letter-spacing:0.05px">EUROPE</span>
<span class="t12" style="left:461px;top:230px;color:#1a1a24;letter-spacing:0.05px">ML EUROPE</span>
<div style="left:10px;top:246px;width:600px;height:18px;background:#FC9A4C"></div>
<div style="left:10px;top:264px;width:600px;height:1px;background:#BE7238"></div>
<div style="left:109px;top:246px;width:1px;height:18px;background:#BE7238"></div>
<div style="left:229px;top:246px;width:1px;height:18px;background:#BE7238"></div>
<div style="left:389px;top:246px;width:1px;height:18px;background:#BE7238"></div>
<div style="left:459px;top:246px;width:1px;height:18px;background:#BE7238"></div>
<div style="left:549px;top:246px;width:1px;height:18px;background:#BE7238"></div>
<div style="left:609px;top:246px;width:1px;height:18px;background:#BE7238"></div>
<span class="t12" style="left:11px;top:249px;color:#1a1a24;letter-spacing:0.05px">COLOGNE</span>
<span class="t12" style="left:111px;top:249px;color:#1a1a24;letter-spacing:0.05px">COLOGNE</span>
<span class="t12" style="left:231px;top:249px;color:#1a1a24;letter-spacing:0.05px">COLOGNE</span>
<span class="t12" style="left:391px;top:249px;color:#1a1a24;letter-spacing:0.05px">EUROPE</span>
<span class="t12" style="left:461px;top:249px;color:#1a1a24;letter-spacing:0.05px">ML EUROPE</span>
<div style="left:10px;top:283px;width:600px;height:1px;background:#BE7238"></div>
<div style="left:109px;top:265px;width:1px;height:18px;background:#BE7238"></div>
<div style="left:229px;top:265px;width:1px;height:18px;background:#BE7238"></div>
<div style="left:389px;top:265px;width:1px;height:18px;background:#BE7238"></div>
<div style="left:459px;top:265px;width:1px;height:18px;background:#BE7238"></div>
<div style="left:549px;top:265px;width:1px;height:18px;background:#BE7238"></div>
<div style="left:609px;top:265px;width:1px;height:18px;background:#BE7238"></div>
<span class="t12" style="left:11px;top:268px;color:#1a1a24;letter-spacing:0.05px">MUNICH</span>
<span class="t12" style="left:111px;top:268px;color:#1a1a24;letter-spacing:0.05px">MUNICH</span>
<span class="t12" style="left:231px;top:268px;color:#1a1a24;letter-spacing:0.05px">MUNICH</span>
<span class="t12" style="left:391px;top:268px;color:#1a1a24;letter-spacing:0.05px">EUROPE</span>
<span class="t12" style="left:461px;top:268px;color:#1a1a24;letter-spacing:0.05px">ML EUROPE</span>
<div style="left:10px;top:302px;width:600px;height:1px;background:#BE7238"></div>
<div style="left:109px;top:284px;width:1px;height:18px;background:#BE7238"></div>
<div style="left:229px;top:284px;width:1px;height:18px;background:#BE7238"></div>
<div style="left:389px;top:284px;width:1px;height:18px;background:#BE7238"></div>
<div style="left:459px;top:284px;width:1px;height:18px;background:#BE7238"></div>
<div style="left:549px;top:284px;width:1px;height:18px;background:#BE7238"></div>
<div style="left:609px;top:284px;width:1px;height:18px;background:#BE7238"></div>
<span class="t12" style="left:11px;top:287px;color:#1a1a24;letter-spacing:0.05px">PARIS</span>
<span class="t12" style="left:111px;top:287px;color:#1a1a24;letter-spacing:0.05px">PARIS</span>
<span class="t12" style="left:231px;top:287px;color:#1a1a24;letter-spacing:0.05px">PARIS</span>
<span class="t12" style="left:391px;top:287px;color:#1a1a24;letter-spacing:0.05px">EUROPE</span>
<span class="t12" style="left:461px;top:287px;color:#1a1a24;letter-spacing:0.05px">ML EUROPE</span>
<div style="left:8px;top:244px;width:603px;height:21px;border:2px solid #c00808"></div>
<div style="left:10px;top:246px;width:100px;height:17px;border:1px solid #d83020"></div>
</div>
</body></html>
